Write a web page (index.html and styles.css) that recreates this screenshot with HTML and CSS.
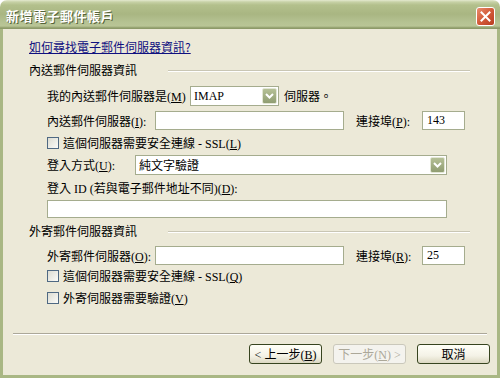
FILE: index.html
```html
<!DOCTYPE html>
<html lang="zh-Hant">
<head>
    <meta charset="UTF-8">
    <title>新增電子郵件帳戶</title>
    <link rel="stylesheet" href="styles.css">
</head>
<body>
    <div class="window">
        <div class="titlebar">
            <span class="title">新增電子郵件帳戶</span>
            <span class="close-btn">
                <svg width="11" height="11" viewBox="0 0 11 11"><path d="M1.5 1.5 L9.5 9.5 M9.5 1.5 L1.5 9.5" stroke="#fff" stroke-width="2" stroke-linecap="square"/></svg>
            </span>
        </div>

        <div class="frame">
            <div class="content">
                <div class="row link-row"><a class="help-link" href="#">如何尋找電子郵件伺服器資訊?</a></div>

                <!-- incoming -->
                <div class="row group-head g-in"><span class="group-title">內送郵件伺服器資訊</span><span class="rule"></span></div>

                <div class="row indent r-type">
                    <span class="lbl lbl-type">我的內送郵件伺服器是(<u>M</u>)</span>
                    <div class="select sel-type">
                        <span class="sel-val">IMAP</span>
                        <span class="drop"><svg width="9" height="6" viewBox="0 0 9 6"><path d="M1 1 L4.5 4.5 L8 1" fill="none" stroke="#fff" stroke-width="2"/></svg></span>
                    </div>
                    <span class="after-sel">伺服器。</span>
                </div>

                <div class="row indent r-server">
                    <span class="lbl lbl-server">內送郵件伺服器(<u>I</u>):</span>
                    <div class="field f-server"></div>
                    <span class="lbl lbl-port">連接埠(<u>P</u>):</span>
                    <div class="field f-port">143</div>
                </div>

                <div class="row indent r-check r-ssl-in">
                    <span class="checkbox"></span>
                    <span class="check-lbl">這個伺服器需要安全連線 - SSL(<u>L</u>)</span>
                </div>

                <div class="row indent r-login">
                    <span class="lbl lbl-login">登入方式(<u>U</u>):</span>
                    <div class="select sel-login">
                        <span class="sel-val">純文字驗證</span>
                        <span class="drop"><svg width="9" height="6" viewBox="0 0 9 6"><path d="M1 1 L4.5 4.5 L8 1" fill="none" stroke="#fff" stroke-width="2"/></svg></span>
                    </div>
                </div>

                <div class="row indent r-id-lbl">
                    <span class="lbl">登入 ID (若與電子郵件地址不同)(<u>D</u>):</span>
                </div>
                <div class="row indent r-id">
                    <div class="field f-id"></div>
                </div>

                <!-- outgoing -->
                <div class="row group-head g-out"><span class="group-title">外寄郵件伺服器資訊</span><span class="rule"></span></div>

                <div class="row indent r-out">
                    <span class="lbl lbl-server">外寄郵件伺服器(<u>O</u>):</span>
                    <div class="field f-server"></div>
                    <span class="lbl lbl-port">連接埠(<u>R</u>):</span>
                    <div class="field f-port">25</div>
                </div>

                <div class="row indent r-check r-ssl-out">
                    <span class="checkbox"></span>
                    <span class="check-lbl">這個伺服器需要安全連線 - SSL(<u>Q</u>)</span>
                </div>
                <div class="row indent r-check r-auth">
                    <span class="checkbox"></span>
                    <span class="check-lbl">外寄伺服器需要驗證(<u>V</u>)</span>
                </div>
            </div>

            <div class="footer">
                <div class="separator"></div>
                <div class="buttons">
                    <button class="btn">&lt; 上一步(<u>B</u>)</button>
                    <button class="btn disabled">下一步(<u>N</u>) &gt;</button>
                    <button class="btn">取消</button>
                </div>
            </div>
        </div>
    </div>
</body>
</html>
```

FILE: styles.css
```css
body {
    margin: 0;
    background: #fff;
    font-family: "Liberation Serif", "Noto Sans CJK TC", serif;
    font-size: 12px;
    color: #000;
}

.window {
    width: 500px;
    height: 378px;
    display: flex;
    flex-direction: column;
}

/* title bar */
.titlebar {
    height: 29px;
    box-sizing: border-box;
    display: flex;
    align-items: center;
    justify-content: space-between;
    padding: 0 5px 0 6px;
    border-radius: 7px 7px 0 0;
    background: linear-gradient(#e4e9cf 0, #c7d1a6 2px, #b3c08c 5px, #a9b682 14px, #b5c292 22px, #b9c596 26px, #8d9a69 28px, #8d9a69 29px);
}

.title {
    color: #fff;
    font-family: "Noto Sans CJK TC", sans-serif;
    font-weight: bold;
    font-size: 13px;
    letter-spacing: 0.5px;
    text-shadow: 1px 1px 0 #56633a;
    margin-top: 1px;
}

.close-btn {
    width: 19px;
    height: 19px;
    box-sizing: border-box;
    border: 1px solid #fff;
    border-radius: 3px;
    background: linear-gradient(135deg, #e98d6e, #d35a39 50%, #b83d20);
    display: flex;
    align-items: center;
    justify-content: center;
    margin-top: 3px;
}

/* window frame and body */
.frame {
    flex: 1;
    display: flex;
    flex-direction: column;
    background: #ece9d8;
    border-style: solid;
    border-color: #a9b784;
    border-width: 0 3px 3px 3px;
}

.content {
    padding-left: 26px;
}

.row {
    display: flex;
    align-items: center;
}

.indent {
    padding-left: 18px;
}

.link-row { margin-top: 9px; height: 16px; }
.help-link {
    color: #10107f;
    text-decoration: underline;
    font-family: "Noto Sans CJK TC", sans-serif;
}

.group-head { height: 16px; }
.g-in { margin-top: 8px; }
.g-out { margin-top: 5px; }
.group-title { width: 139px; }
.rule {
    width: 302px;
    border-top: 1px solid #c9c6b4;
    border-bottom: 1px solid #fff;
    margin-top: 1px;
}

.lbl { white-space: nowrap; }

/* first row: server type */
.r-type { margin-top: 8px; height: 20px; }
.lbl-type { width: 143px; }
.after-sel { margin-left: 5px; }

.select {
    height: 20px;
    box-sizing: border-box;
    background: #fff;
    border: 1px solid #a5ac8e;
    display: flex;
    align-items: center;
    justify-content: space-between;
    padding: 0 1px 0 3px;
}
.sel-type { width: 89px; }
.sel-login { width: 312px; }
.sel-val { white-space: nowrap; }

.drop {
    width: 15px;
    height: 16px;
    box-sizing: border-box;
    border: 1px solid #e2e6d4;
    border-radius: 2px;
    background: linear-gradient(#b5c096, #909d72);
    display: flex;
    align-items: center;
    justify-content: center;
}

.field {
    height: 19px;
    box-sizing: border-box;
    background: #fff;
    border: 1px solid #a5ac8e;
    padding: 0 4px;
    display: flex;
    align-items: center;
}
.f-server { width: 189px; }
.f-port { width: 43px; }
.f-id { width: 400px; height: 18px; }

.lbl-server { width: 108px; }
.lbl-port { width: 66px; margin-left: 12px; }

.r-server { margin-top: 5px; height: 19px; }
.r-out { margin-top: 7px; height: 19px; }

.r-check { height: 16px; }
.r-ssl-in { margin-top: 5px; }
.r-ssl-out { margin-top: 3px; }
.r-auth { margin-top: 6px; }

.checkbox {
    width: 12px;
    height: 12px;
    box-sizing: border-box;
    border: 1px solid #4f6983;
    background: linear-gradient(135deg, #dcdcd2, #fbfbf8);
}
.check-lbl { margin-left: 4px; white-space: nowrap; }

.r-login { margin-top: 4px; height: 20px; }
.lbl-login { width: 88px; }

.r-id-lbl { margin-top: 5px; height: 16px; }
.r-id { margin-top: 4px; }

/* footer */
.footer {
    margin-top: auto;
    padding: 0 7px 11px 10px;
}

.separator {
    border-top: 1px solid #aca899;
    border-bottom: 1px solid #fff;
    margin-right: 3px;
}

.buttons {
    display: flex;
    justify-content: flex-end;
    gap: 11px;
    margin-top: 9px;
}

.btn {
    width: 73px;
    height: 20px;
    padding: 0;
    font: inherit;
    color: #000;
    border: 1px solid #37441f;
    border-radius: 3px;
    background: linear-gradient(#fffff8, #f4f2e6 60%, #dcd8c2);
}
.btn.disabled {
    color: #aca899;
    border-color: #cac8bb;
    background: #f4f3ee;
}
```
